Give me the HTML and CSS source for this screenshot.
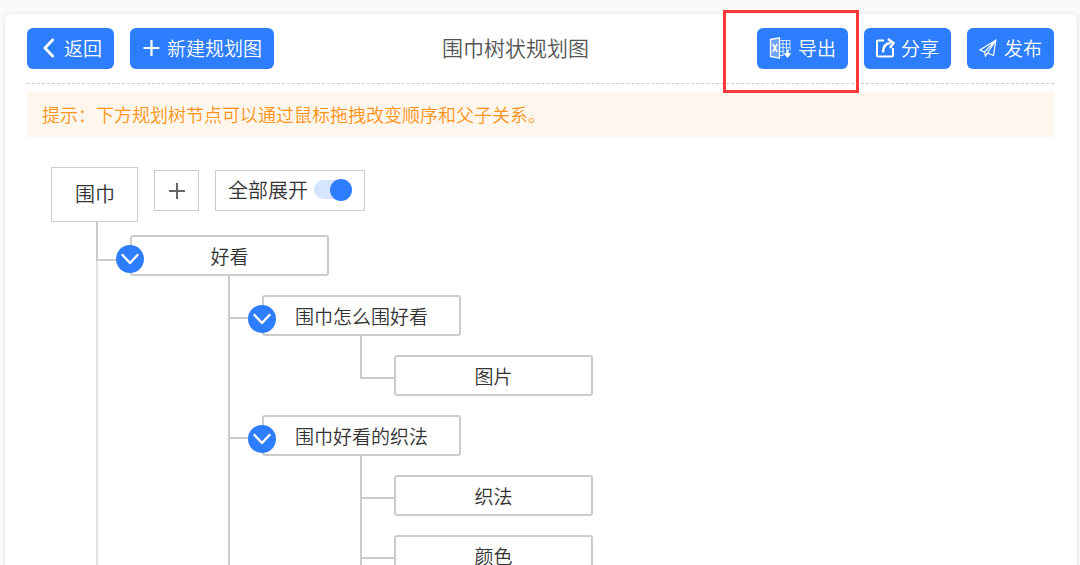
FILE: index.html
```html
<!DOCTYPE html>
<html lang="zh-CN">
<head>
<meta charset="utf-8">
<title>围巾树状规划图</title>
<link rel="stylesheet" href="styles.css">
</head>
<body>
<main class="card">
  <header class="toolbar">
    <div class="group">
      <button class="btn" type="button">
        <svg class="icon" viewBox="0 0 18 18"><path d="M14.500 0 6 9l8.500 9" stroke-width="2.800"/></svg>返回
      </button>
      <button class="btn" type="button">
        <svg class="icon" viewBox="0 0 18 18"><path d="M9.500 1v16M1.500 9h16" stroke-width="2.200"/></svg>新建规划图
      </button>
    </div>
    <h1 class="title">围巾树状规划图</h1>
    <div class="group">
      <div class="marked">
        <button class="btn" type="button">
          <svg class="icon icon-export" viewBox="0 0 22 22"><path class="pane" d="M1.500 2.500 10.500.8v20.400l-9-1.700z" stroke-width="1.300"/><path d="m3.800 7 4.400 8M8.200 7l-4.400 8" stroke-width="1.600"/><path d="M10.500 3.500H21v10M10.500 18.500h4M10.500 7H21M10.500 10.700H21M10.500 14.300h5M14 3.500v15M17.500 3.500v9" stroke-width="1" opacity=".8"/><path d="M18.500 12.500v6" stroke-width="2.400"/><path class="solid" d="M14.500 16.200h8l-4 4.800z"/></svg>导出
        </button>
      </div>
      <button class="btn" type="button">
        <svg class="icon" viewBox="0 0 18 18"><path d="M8 1.500H2Q1 1.500 1 2.500v14q0 1 1 1h14q1 0 1-1V9" stroke-width="2"/><path d="M7 13.500C7 8 9.500 4.500 14.500 4" stroke-width="2.400"/><path d="m12 0 5.500 4-3.500 5" stroke-width="2.400"/></svg>分享
      </button>
      <button class="btn" type="button">
        <svg class="icon" viewBox="0 0 18 18"><path d="M16.800 1.200 1 11l4.500 2L16.800 1.200 8.500 14l6 2.500zM5.500 13l1 4 2-3M16.800 1.200 6.500 17" stroke-width="1.200"/></svg>发布
      </button>
    </div>
  </header>
  <p class="tip">提示：下方规划树节点可以通过鼠标拖拽改变顺序和父子关系。</p>
  <section class="plan">
    <div class="root-row">
      <div class="root">围巾</div>
      <button class="add" type="button" aria-label="添加节点">
        <svg class="add-icon" viewBox="0 0 16 16"><path d="M8 0v16M0 8h16" stroke-width="2"/></svg>
      </button>
      <label class="expand">全部展开<input class="switch" type="checkbox" role="switch" checked></label>
    </div>
    <ul class="tree">
      <li class="item item-top">
        <div class="node">好看<button class="toggle" type="button" aria-label="收起好看"><svg class="chevron" viewBox="0 0 18 12"><path d="m1.500 2 7.500 8 7.500-8" stroke-width="2.400"/></svg></button></div>
        <ul class="branch">
          <li class="item">
            <div class="node">围巾怎么围好看<button class="toggle" type="button" aria-label="收起围巾怎么围好看"><svg class="chevron" viewBox="0 0 18 12"><path d="m1.500 2 7.500 8 7.500-8" stroke-width="2.400"/></svg></button></div>
            <ul class="branch">
              <li class="item item-end"><div class="node">图片</div></li>
            </ul>
          </li>
          <li class="item">
            <div class="node">围巾好看的织法<button class="toggle" type="button" aria-label="收起围巾好看的织法"><svg class="chevron" viewBox="0 0 18 12"><path d="m1.500 2 7.500 8 7.500-8" stroke-width="2.400"/></svg></button></div>
            <ul class="branch">
              <li class="item"><div class="node">织法</div></li>
              <li class="item"><div class="node">颜色</div></li>
            </ul>
          </li>
        </ul>
      </li>
    </ul>
  </section>
</main>
</body>
</html>
```

FILE: styles.css
```css
* { box-sizing: border-box; }

body {
  height: 100vh;
  margin: 0;
  padding: 14px 3px 0 5px;
  overflow: hidden;
  background: #fafafa;
  color: #333;
  font: 350 19px/28px "Noto Sans CJK SC", sans-serif;
}

button {
  margin: 0;
  padding: 0;
  border: 0;
  font: inherit;
  cursor: pointer;
}

svg {
  fill: none;
  stroke: currentColor;
  overflow: visible;
}

.card {
  min-height: 100%;
  padding: 14px 23px 19px 22px;
  border-radius: 6px;
  background: #fff;
  box-shadow: 0 0 5px rgba(0, 0, 0, 0.1);
}

.toolbar {
  display: flex;
  align-items: center;
  justify-content: space-between;
  padding-bottom: 14px;
  border-bottom: 1px dashed #ccc;
}

.group {
  display: flex;
  gap: 16px;
}

.btn {
  display: flex;
  align-items: center;
  gap: 7px;
  height: 41px;
  padding: 0 12px 2px;
  border-radius: 6px;
  background: #2d7dff;
  color: #fff;
  white-space: nowrap;
}

.icon {
  width: 18px;
  height: 18px;
}

.icon-export {
  width: 22px;
  height: 22px;
}

.pane { fill: rgba(255, 255, 255, 0.3); }

.solid {
  fill: currentColor;
  stroke: none;
}

.title {
  margin: 0;
  padding-bottom: 4px;
  color: #555;
  font-size: 21px;
  font-weight: 350;
}

.marked { position: relative; }

.marked::after {
  content: "";
  position: absolute;
  inset: -18px -11px -24px -34px;
  border: 3px solid #fa3a3a;
  pointer-events: none;
}

.tip {
  margin: 8px 0 30px;
  padding: 8px 15px 9px;
  background: #fff7ee;
  color: #ff9318;
  font-size: 18px;
}

.plan { padding-left: 24px; }

.root-row {
  display: flex;
  gap: 16px;
  align-items: flex-start;
  font-size: 20px;
}

.root {
  padding: 12px 22px 13px 23px;
  border: 1px solid #ccc;
}

.add {
  display: grid;
  place-items: center;
  width: 45px;
  height: 41px;
  margin-top: 3px;
  border: 1px solid #ccc;
  background: #fff;
  color: #666;
}

.add-icon {
  width: 16px;
  height: 16px;
}

.expand {
  display: flex;
  align-items: center;
  gap: 6px;
  height: 41px;
  margin-top: 3px;
  padding: 0 12px 2px;
  border: 1px solid #ccc;
}

.switch {
  position: relative;
  width: 38px;
  height: 19px;
  margin: 0;
  border-radius: 10px;
  background: #d5e5ff;
  appearance: none;
}

.switch::before {
  content: "";
  position: absolute;
  top: -1px;
  left: 0;
  width: 22px;
  height: 22px;
  border-radius: 50%;
  background: #999;
}

.switch:checked::before {
  left: auto;
  right: 0;
  background: #2d7dff;
}

.tree,
.branch {
  display: grid;
  gap: 19px;
  margin: 0;
  padding: 0;
  list-style: none;
}

.tree { padding: 13px 0 0 79px; }

.branch { padding: 19px 0 0 132px; }

.item { position: relative; }

.item::before {
  content: "";
  position: absolute;
  top: -19px;
  bottom: -19px;
  left: -34px;
  border-left: 2px solid #ccc;
}

.item::after {
  content: "";
  position: absolute;
  top: 22px;
  left: -34px;
  width: 34px;
  border-top: 2px solid #ccc;
}

.item-end::before {
  bottom: auto;
  height: 43px;
}

.item-top::before {
  top: -13px;
  border-left-color: #e2e2e2;
}

.item-top::after {
  top: -13px;
  height: 37px;
  border-top: 0;
  border-bottom: 2px solid #ccc;
  border-left: 2px solid #ccc;
}

.node {
  position: relative;
  width: 199px;
  height: 41px;
  border: 2px solid #ccc;
  border-radius: 3px;
  line-height: 37px;
  text-align: center;
}

.toggle {
  position: absolute;
  z-index: 1;
  top: 8px;
  left: -16px;
  display: grid;
  place-items: center;
  width: 28px;
  height: 28px;
  border-radius: 50%;
  background: #2d7dff;
  color: #fff;
}

.chevron {
  width: 18px;
  height: 12px;
  stroke-linecap: round;
  stroke-linejoin: round;
}
```
